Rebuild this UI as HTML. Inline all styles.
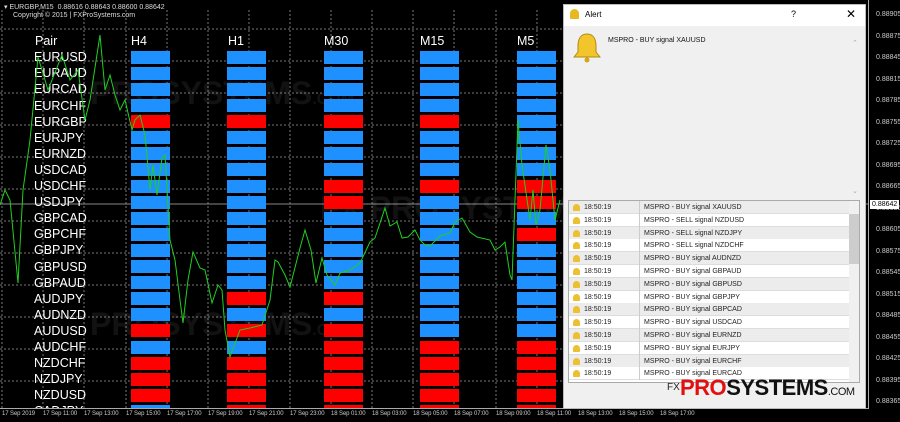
<!DOCTYPE html>
<html><head><meta charset="utf-8"><style>
*{margin:0;padding:0;box-sizing:border-box}
body{width:900px;height:422px;background:#000;position:relative;overflow:hidden;font-family:"Liberation Sans",sans-serif}
.a{position:absolute}
.pl{position:absolute;left:34px;color:#fff;font-size:12.5px;line-height:14px}
.hd{position:absolute;top:34px;color:#fff;font-size:12.5px}
.b{position:absolute;width:39px;height:13px;background:#1e90ff}
.r{background:#ff0000}
.pr{position:absolute;left:876px;color:#ccc;font-size:7px}
.t{position:absolute;top:411px;color:#ccc;font-size:6px;white-space:nowrap;letter-spacing:-0.1px}
.wm{position:absolute;color:#fff;opacity:.07;font-weight:bold;font-size:32px;white-space:nowrap}
.row{position:absolute;left:0;width:280px;height:13px;font-size:7px;color:#222;line-height:13px;border-bottom:1px solid #ddd}
</style></head><body>
<svg class="a" style="left:0;top:0" width="870" height="410">
<g stroke="#777" stroke-dasharray="2,2" stroke-width="1">
<line x1="0" y1="29" x2="868" y2="29"/><line x1="0" y1="61" x2="868" y2="61"/><line x1="0" y1="93" x2="868" y2="93"/><line x1="0" y1="125" x2="868" y2="125"/><line x1="0" y1="157" x2="868" y2="157"/><line x1="0" y1="189" x2="868" y2="189"/><line x1="0" y1="221" x2="868" y2="221"/><line x1="0" y1="253" x2="868" y2="253"/><line x1="0" y1="285" x2="868" y2="285"/><line x1="0" y1="317" x2="868" y2="317"/><line x1="0" y1="349" x2="868" y2="349"/><line x1="0" y1="381" x2="868" y2="381"/>
<line x1="2" y1="10" x2="2" y2="408"/><line x1="43" y1="10" x2="43" y2="408"/><line x1="84" y1="10" x2="84" y2="408"/><line x1="126" y1="10" x2="126" y2="408"/><line x1="167" y1="10" x2="167" y2="408"/><line x1="208" y1="10" x2="208" y2="408"/><line x1="249" y1="10" x2="249" y2="408"/><line x1="290" y1="10" x2="290" y2="408"/><line x1="331" y1="10" x2="331" y2="408"/><line x1="372" y1="10" x2="372" y2="408"/><line x1="413" y1="10" x2="413" y2="408"/><line x1="454" y1="10" x2="454" y2="408"/><line x1="496" y1="10" x2="496" y2="408"/><line x1="537" y1="10" x2="537" y2="408"/>
</g>
<line x1="0" y1="204" x2="868" y2="204" stroke="#888"/>
<line x1="868.5" y1="0" x2="868.5" y2="409" stroke="#aaa"/>
</svg>
<div class="wm" style="left:90px;top:75px">PROSYSTEMS<span style="font-size:16px">.COM</span></div>
<div class="wm" style="left:320px;top:190px">FX PROSYSTEMS.</div>
<div class="wm" style="left:90px;top:306px">PROSYSTEMS<span style="font-size:16px">.COM</span></div>
<div class="wm" style="left:600px;top:80px;opacity:.12">PROSYSTEMS</div>
<div class="a" style="left:4px;top:3px;color:#ddd;font-size:7px">▾ EURGBP,M15 &nbsp;0.88616 0.88643 0.88600 0.88642</div>
<div class="a" style="left:13px;top:12px;color:#ddd;font-size:7px">Copyright © 2015 | FXProSystems.com</div>
<div class="hd" style="left:35px">Pair</div>
<div class="hd" style="left:131px">H4</div><div class="hd" style="left:228px">H1</div><div class="hd" style="left:324px">M30</div><div class="hd" style="left:420px">M15</div><div class="hd" style="left:517px">M5</div>
<div id="g"></div>
<script>
var P=["EURUSD","EURAUD","EURCAD","EURCHF","EURGBP","EURJPY","EURNZD","USDCAD","USDCHF","USDJPY","GBPCAD","GBPCHF","GBPJPY","GBPUSD","GBPAUD","AUDJPY","AUDNZD","AUDUSD","AUDCHF","NZDCHF","NZDJPY","NZDUSD","CADJPY"];
var X=[131,227,324,420,517];
var R=[[4,17,19,20,21],[4,15,17,19,20,21,22],[4,8,9,15,17,18,19,20,21,22],[4,8,18,19,20,21,22],[8,9,11,18,19,20,21,22]];
var h="";
for(var i=0;i<23;i++){var y=50.7+i*16.1;h+='<div class="pl" style="top:'+(y-0.5)+'px">'+P[i]+'</div>';
for(var c=0;c<5;c++){var hh=i==22?Math.min(13,408-y):13;h+='<div class="b'+(R[c].indexOf(i)>=0?' r':'')+'" style="left:'+X[c]+'px;top:'+y+'px;height:'+hh+'px"></div>';}}
document.getElementById('g').innerHTML=h;
</script>
<svg class="a" style="left:0;top:0" width="870" height="410"><polyline fill="none" stroke="#1fd01f" stroke-width="1" points="0,205 5,190 10,200 18,283 23,190 30,140 38,57 42,70 48,90 62,55 70,80 78,70 85,120 90,100 100,35 105,90 110,75 115,95 120,110 125,100 132,130 135,120 140,115 145,135 150,190 153,165 157,195 162,158 165,155 170,240 175,260 180,300 183,323 188,280 193,252 200,268 205,270 212,303 218,285 222,290 225,330 230,357 234,346 240,330 250,328 262,325 270,300 275,260 278,262 285,275 290,287 300,248 305,230 311,250 316,283 322,258 327,275 335,285 340,273 350,270 360,263 370,242 375,238 385,208 390,226 397,222 402,238 408,237 415,230 420,240 425,245 430,246 440,236 450,233 455,222 462,218 470,232 477,237 490,240 495,250 500,247 505,242 510,275 512,280 518,120 522,165 530,220 533,190 536,225 540,210 546,145 550,170 555,220 560,200"/></svg>
<div class="a" style="left:0;top:408px;width:868px;height:14px;background:#000;border-top:1px solid #aaa"></div>
<div class="t" style="left:2px">17 Sep 2019</div><div class="t" style="left:43px">17 Sep 11:00</div><div class="t" style="left:84px">17 Sep 13:00</div><div class="t" style="left:126px">17 Sep 15:00</div><div class="t" style="left:167px">17 Sep 17:00</div><div class="t" style="left:208px">17 Sep 19:00</div><div class="t" style="left:249px">17 Sep 21:00</div><div class="t" style="left:290px">17 Sep 23:00</div><div class="t" style="left:331px">18 Sep 01:00</div><div class="t" style="left:372px">18 Sep 03:00</div><div class="t" style="left:413px">18 Sep 05:00</div><div class="t" style="left:454px">18 Sep 07:00</div><div class="t" style="left:496px">18 Sep 09:00</div><div class="t" style="left:537px">18 Sep 11:00</div><div class="t" style="left:578px">18 Sep 13:00</div><div class="t" style="left:619px">18 Sep 15:00</div><div class="t" style="left:660px">18 Sep 17:00</div>
<div id="pp"></div>
<script>
var v=[88905,88875,88845,88815,88785,88755,88725,88695,88665,88635,88605,88575,88545,88515,88485,88455,88425,88395,88365],s="";
for(var i=0;i<v.length;i++){s+='<div class="pr" style="top:'+(11+i*21.5)+'px">0.'+v[i]+'</div>';}
document.getElementById('pp').innerHTML=s;
</script>
<div class="a" style="left:870px;top:200px;background:#fff;color:#000;font-size:7px;padding:0 2px;line-height:9px">0.88642</div>
<div class="a" style="left:563px;top:4px;width:303px;height:405px;background:#f0f0f0;border:1px solid #bbb">
<div class="a" style="left:0;top:0;width:301px;height:21px;background:#fff"></div>
<div class="a" style="left:6px;top:4px;width:9px;height:10px;background:#e8b820;border-radius:5px 5px 1px 1px"></div>
<div class="a" style="left:21px;top:5px;font-size:8px;color:#000">Alert</div>
<div class="a" style="left:227px;top:4px;font-size:9px;color:#000">?</div>
<div class="a" style="left:282px;top:2px;font-size:12px;color:#000">✕</div>
<svg class="a" style="left:9px;top:27px" width="28" height="31"><path d="M14 2 C7 2 5 8 5 14 L5 20 L1 25 L27 25 L23 20 L23 14 C23 8 21 2 14 2Z" fill="#f2c52a" stroke="#b08a10"/><circle cx="14" cy="28" r="2.5" fill="#d9a515"/></svg>
<div class="a" style="left:44px;top:32px;font-size:7px;color:#111">MSPRO - BUY signal XAUUSD</div>
<div class="a" style="left:288px;top:34px;font-size:7px;color:#aaa">⌃</div>
<div class="a" style="left:288px;top:182px;font-size:7px;color:#aaa">⌄</div>
<div class="a" style="left:4px;top:195px;width:292px;height:183px;background:#fff;border:1px solid #aaa;overflow:hidden" id="lst"></div>
<div class="a" style="left:103px;top:377px;font-size:10px;color:#222">FX</div>
<div class="a" style="left:116px;top:370px;font-size:22px;font-weight:bold;color:#111;letter-spacing:-0.5px;white-space:nowrap"><span style="color:#e31010">PRO</span>SYSTEMS<span style="font-size:11px;font-weight:normal">.COM</span></div>
</div>
<script>
var m=["BUY signal XAUUSD","SELL signal NZDUSD","SELL signal NZDJPY","SELL signal NZDCHF","BUY signal AUDNZD","BUY signal GBPAUD","BUY signal GBPUSD","BUY signal GBPJPY","BUY signal GBPCAD","BUY signal USDCAD","BUY signal EURNZD","BUY signal EURJPY","BUY signal EURCHF","BUY signal EURCAD"],q="";
for(var i=0;i<m.length;i++){q+='<div class="row" style="top:'+(i*12.8)+'px;background:'+(i%2?'#fff':'#ececec')+'"><span style="position:absolute;left:4px;top:3px;width:7px;height:7px;background:#ecc030;border-radius:4px 4px 1px 1px"></span><span style="position:absolute;left:15px">18:50:19</span><span style="position:absolute;left:70px;top:0;height:13px;border-left:1px solid #ccc"></span><span style="position:absolute;left:75px">MSPRO - '+m[i]+'</span></div>';}
q+='<div style="position:absolute;left:280px;top:0;width:11px;height:181px;background:#f0f0f0"><div style="position:absolute;left:0;top:13px;width:11px;height:50px;background:#cdcdcd"></div></div>';
document.getElementById('lst').innerHTML=q;
</script>
</body></html>
